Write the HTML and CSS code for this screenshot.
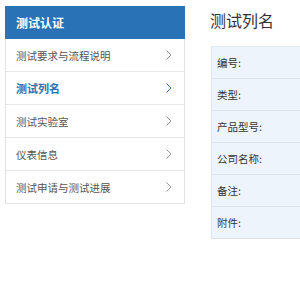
FILE: index.html
```html
<!DOCTYPE html>
<html lang="zh-CN">
<head>
  <meta charset="UTF-8">
  <title>测试列名</title>
  <link rel="stylesheet" href="styles.css">
</head>
<body>
  <div class="page">
    <div class="sidebar">
      <div class="side-title">测试认证</div>
      <div class="side-item">测试要求与流程说明<svg class="arrow" viewBox="0 0 6 10"><path d="M0.5 0.5 L5 5 L0.5 9.5"/></svg></div>
      <div class="side-item active">测试列名<svg class="arrow" viewBox="0 0 6 10"><path d="M0.5 0.5 L5 5 L0.5 9.5"/></svg></div>
      <div class="side-item">测试实验室<svg class="arrow" viewBox="0 0 6 10"><path d="M0.5 0.5 L5 5 L0.5 9.5"/></svg></div>
      <div class="side-item">仪表信息<svg class="arrow" viewBox="0 0 6 10"><path d="M0.5 0.5 L5 5 L0.5 9.5"/></svg></div>
      <div class="side-item">测试申请与测试进展<svg class="arrow" viewBox="0 0 6 10"><path d="M0.5 0.5 L5 5 L0.5 9.5"/></svg></div>
    </div>

    <div class="main">
      <h2 class="main-title">测试列名</h2>
      <div class="info-table">
        <div class="info-row">编号:</div>
        <div class="info-row">类型:</div>
        <div class="info-row">产品型号:</div>
        <div class="info-row">公司名称:</div>
        <div class="info-row">备注:</div>
        <div class="info-row">附件:</div>
      </div>
    </div>
  </div>
</body>
</html>
```

FILE: styles.css
```css
body {
  margin: 0;
  font-family: "Noto Sans CJK SC", "Liberation Sans", sans-serif;
  color: #333;
  background: #fff;
  overflow: hidden;
}
.page {
  display: flex;
  align-items: flex-start;
  gap: 25px;
  padding: 6px 5px;
  width: 900px;
}
.sidebar {
  width: 178px;
  border: 1px solid #e3e3e3;
  border-top: none;
  flex-shrink: 0;
}
.side-title {
  background: #2a72b6;
  color: #fff;
  font-size: 12px;
  font-weight: bold;
  height: 33px;
  line-height: 33px;
  margin: 0 -1px;
  padding-left: 11px;
}
.side-item {
  display: flex;
  justify-content: space-between;
  align-items: center;
  height: 32px;
  padding: 0 12px 0 10px;
  font-size: 10.5px;
  color: #555;
  border-bottom: 1px solid #e6e6e6;
}
.side-item:last-child {
  border-bottom: none;
}
.side-item.active {
  color: #2a72b6;
  font-weight: bold;
  font-size: 11px;
}
.arrow {
  width: 6px;
  height: 10px;
  fill: none;
  stroke: #999;
  stroke-width: 1;
}
.side-item.active .arrow {
  stroke: #2a72b6;
}
.main {
  flex: 1;
}
.main-title {
  margin: 3px 0 15px 0;
  font-size: 16px;
  font-weight: normal;
  color: #333;
  line-height: 22px;
}
.info-table {
  margin-left: 1px;
  background: #eef4fc;
  border-left: 1px solid #dce4ee;
  border-top: 1px solid #e4eaf2;
}
.info-row {
  height: 31px;
  line-height: 31px;
  padding-left: 5px;
  font-size: 10.5px;
  color: #333;
  border-bottom: 1px solid #dce4ee;
}
```
